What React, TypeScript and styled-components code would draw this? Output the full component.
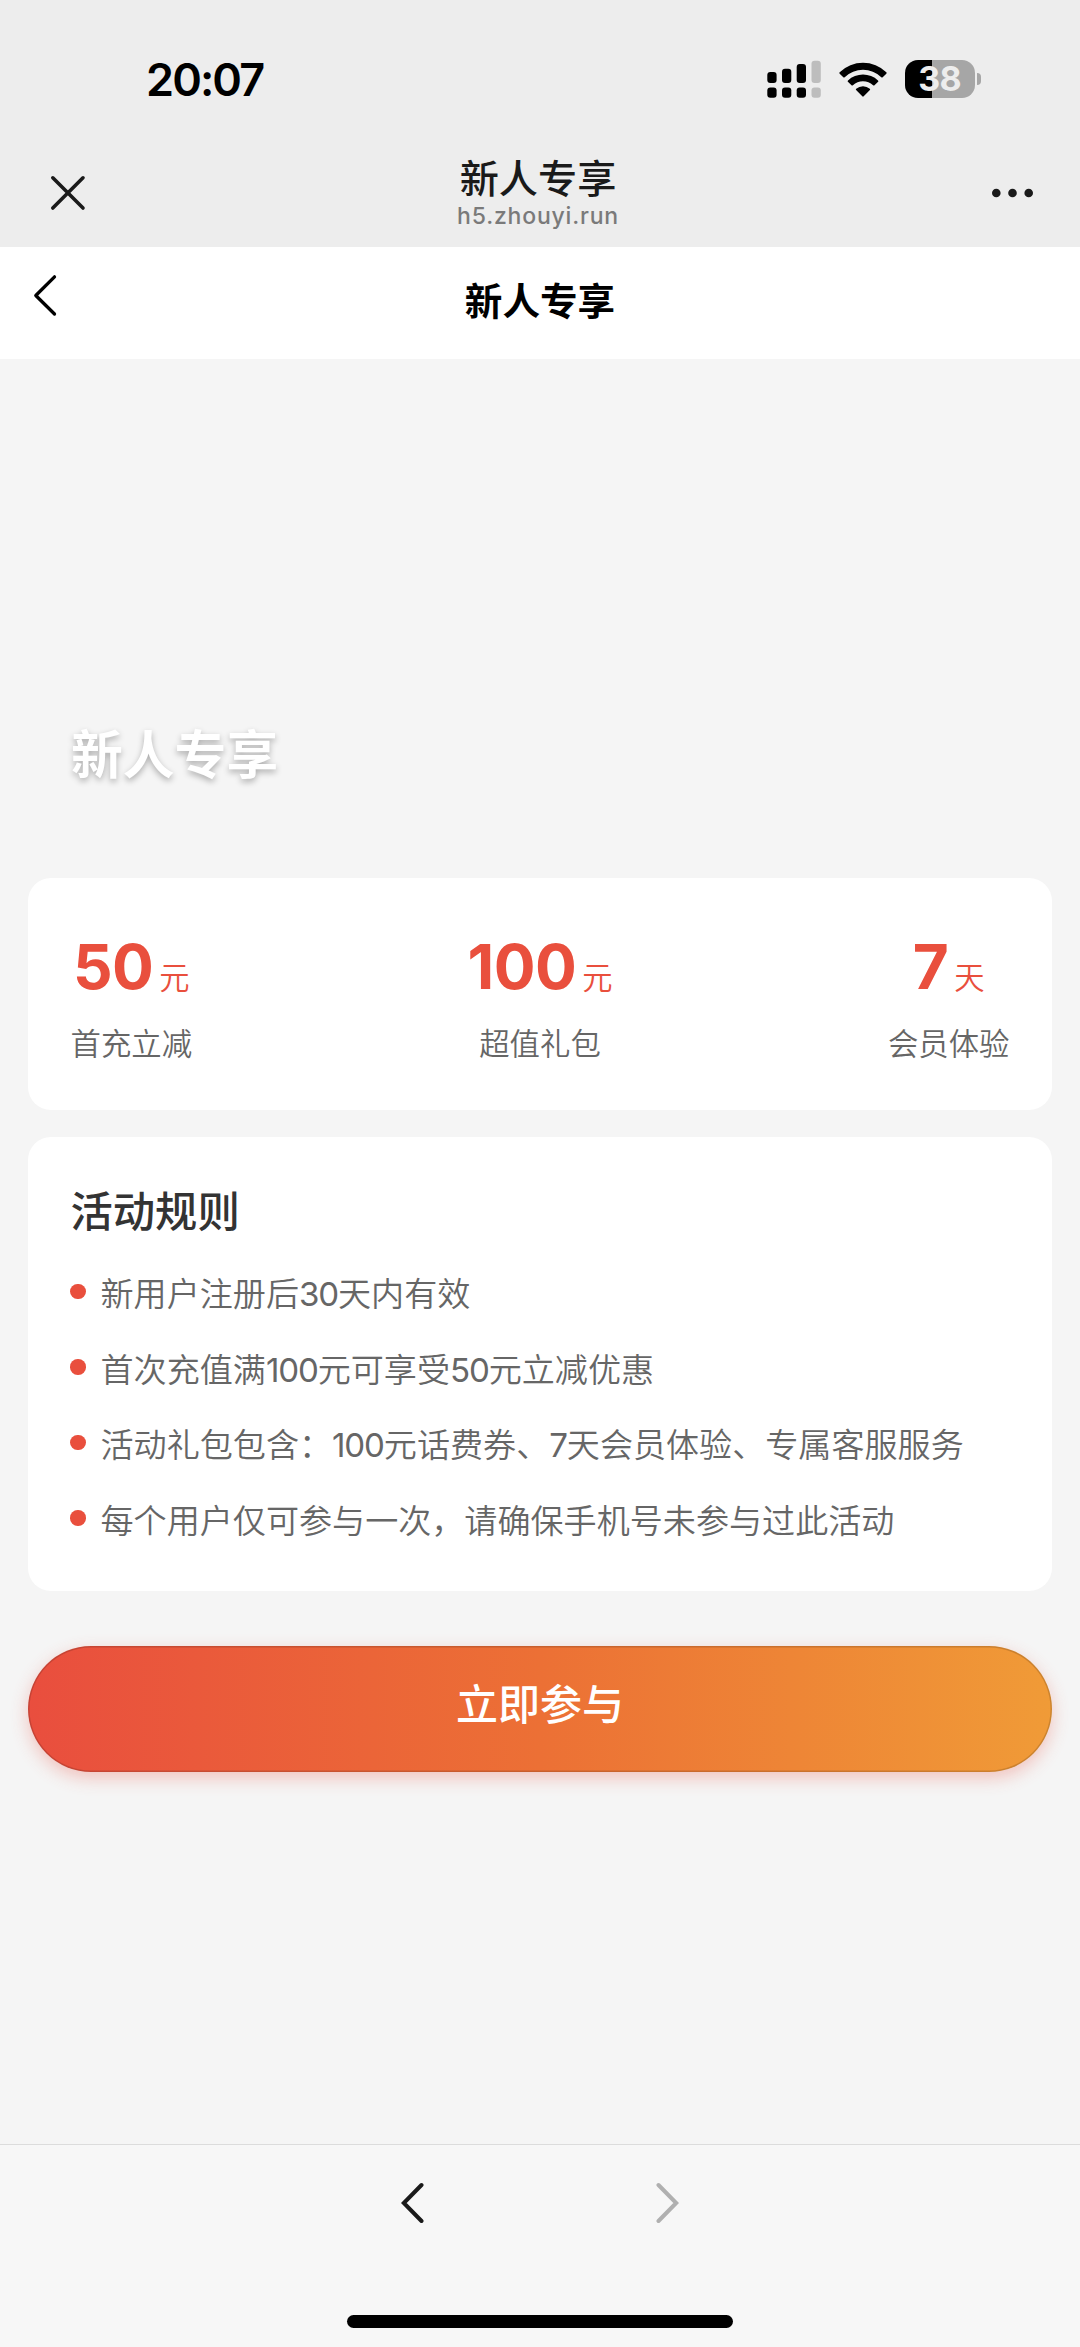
import React from "react";
import styled, { createGlobalStyle } from "styled-components";

const GlobalStyle = createGlobalStyle`
  * { box-sizing: border-box; }
  html, body { margin: 0; padding: 0; background: #f5f5f5; }
  body { font-family: Inter, "Noto Sans CJK SC", sans-serif; }
`;

const Screen = styled.div`
  width: 1080px;
  height: 2347px;
  display: flex;
  flex-direction: column;
  background: #f5f5f5;
  overflow: hidden;
`;

const StatusBar = styled.div`
  height: 146px;
  flex: none;
  display: flex;
  align-items: flex-start;
  justify-content: space-between;
  padding: 50px 99.5px 0 146px;
  background: #ededed;
`;

const Clock = styled.time`
  font-size: 45px;
  line-height: 60px;
  font-weight: 600;
  letter-spacing: -1.9px;
  color: #000;
`;

const StatusIcons = styled.div`
  display: flex;
  align-items: center;
  height: 57px;
`;

const SignalIcon = styled.svg`
  width: 54px;
  height: 38px;
  margin-right: 18px;
`;

const WifiIcon = styled.svg`
  width: 48px;
  height: 38px;
  margin-right: 18px;
`;

const Battery = styled.div`
  width: 70px;
  height: 38px;
  border-radius: 13px;
  display: flex;
  align-items: center;
  justify-content: center;
  background: linear-gradient(90deg, #000 0 38%, #a6a6a6 38%);
  color: #ededed;
  font-size: 34px;
  line-height: 38px;
  font-weight: 700;
  letter-spacing: -0.8px;
`;

const BatteryTip = styled.div`
  width: 4px;
  height: 12px;
  margin-left: 2px;
  border-radius: 0 6px 6px 0;
  background: #a6a6a6;
`;

const BrowserBar = styled.header`
  height: 101px;
  flex: none;
  display: grid;
  grid-template-columns: 200px 1fr 200px;
  background: #ededed;
`;

const BarIcon = styled.svg<{ $end?: boolean }>`
  width: 40px;
  height: 40px;
  margin: 27px 48px 0;
  justify-self: ${(p) => (p.$end ? "end" : "start")};
`;

const PageInfo = styled.div`
  display: flex;
  flex-direction: column;
  align-items: center;
  padding-top: 10px;
`;

const PageName = styled.div`
  font-size: 39.2px;
  line-height: 46px;
  font-weight: 500;
  color: #1a1a1a;
  margin-right: 4px;
`;

const PageHost = styled.div`
  font-size: 23px;
  line-height: 28px;
  margin-right: 4px;
  font-weight: 500;
  letter-spacing: 0.8px;
  color: #7a7a7a;
`;

const NavBar = styled.nav`
  height: 112px;
  flex: none;
  display: grid;
  grid-template-columns: 200px 1fr 200px;
  background: #fff;
`;

const BackIcon = styled.svg`
  width: 26px;
  height: 44px;
  margin: 26px 0 0 31px;
`;

const NavTitle = styled.h1`
  margin: 0;
  padding-top: 28px;
  text-align: center;
  font-size: 37.6px;
  line-height: 54px;
  font-weight: 700;
  color: #000;
`;

const Content = styled.main`
  flex: 1;
  padding: 0 28px;
`;

const Hero = styled.section`
  height: 519px;
  display: flex;
  align-items: flex-end;
  padding: 0 43px 86px;
`;

const HeroTitle = styled.h2`
  margin: 0;
  font-size: 51.8px;
  line-height: 73px;
  font-weight: 700;
  color: #fff;
  text-shadow: 0 3px 6px rgba(0, 0, 0, 0.3);
`;

const Card = styled.section`
  background: #fff;
  border-radius: 23px;
`;

const BenefitCard = styled(Card)`
  height: 232px;
  margin-bottom: 27px;
  padding: 50px 42.5px 0;
  display: flex;
  align-items: flex-start;
  justify-content: space-between;
`;

const Benefit = styled.div`
  display: flex;
  flex-direction: column;
  align-items: center;
`;

const Amount = styled.div`
  display: flex;
  align-items: baseline;
  gap: 6px;
  height: 78px;
  color: #e94f3d;
`;

const Figure = styled.span`
  font-size: 62px;
  line-height: 78px;
  font-weight: 650;
  letter-spacing: -0.5px;
`;

const Unit = styled.span`
  font-size: 30.3px;
  font-weight: 350;
  line-height: 40px;
`;

const BenefitLabel = styled.div`
  margin-top: 16px;
  font-size: 30.4px;
  font-weight: 350;
  line-height: 44px;
  color: #666;
`;

const RulesCard = styled(Card)`
  height: 454px;
  padding: 45px 43px 0 42.5px;
`;

const RulesTitle = styled.h3`
  margin: 0 0 19px;
  font-size: 42.3px;
  line-height: 60px;
  font-weight: 500;
  color: #333;
`;

const RuleList = styled.ul`
  list-style: none;
  margin: 0;
  padding: 0;
`;

const Rule = styled.li`
  display: flex;
  align-items: flex-start;
  height: 75.5px;
  font-size: 33.1px;
  font-weight: 350;
  line-height: 66px;
  color: #666;
  white-space: nowrap;

  &::before {
    content: "";
    flex: none;
    width: 15.5px;
    height: 15.5px;
    margin: 22.5px 15px 0 -0.5px;
    border-radius: 50%;
    background: #e94f3d;
  }
`;

const Digits = styled.span`
  font-weight: 400;
  letter-spacing: -1.15px;
`;

const JoinButton = styled.button`
  display: block;
  width: 100%;
  height: 126px;
  margin: 55px 0 0;
  padding: 0 0 8px;
  border: 0;
  border-radius: 63px;
  background: linear-gradient(90deg, #e94e3e 0%, #ec7035 50%, #f09b37 100%);
  box-shadow: 0 6px 17px rgba(231, 76, 60, 0.3), inset 0 0 0 1.5px rgba(0, 0, 0, 0.15);
  font: 500 42px/118px Inter, "Noto Sans CJK SC", sans-serif;
  color: #fff;
`;

const Toolbar = styled.footer`
  height: 203px;
  flex: none;
  display: flex;
  flex-direction: column;
  align-items: center;
  justify-content: space-between;
  padding: 36px 0 19.5px;
  border-top: 1px solid #dcdcdc;
  background: #f7f7f7;
`;

const HistoryButtons = styled.div`
  display: flex;
  gap: 230px;
`;

const HistoryIcon = styled.svg`
  width: 24px;
  height: 44px;
`;

const HomeIndicator = styled.div`
  width: 386px;
  height: 12.5px;
  border-radius: 7px;
  background: #000;
`;

const benefits = [
  { value: "50", unit: "元", label: "首充立减" },
  { value: "100", unit: "元", label: "超值礼包" },
  { value: "7", unit: "天", label: "会员体验" },
];

const rules = [
  "新用户注册后30天内有效",
  "首次充值满100元可享受50元立减优惠",
  "活动礼包包含：100元话费券、7天会员体验、专属客服服务",
  "每个用户仅可参与一次，请确保手机号未参与过此活动",
];

const signalBars = [
  { x: 0.3, top: 12, on: true },
  { x: 15, top: 8.7, on: true },
  { x: 29.7, top: 4, on: true },
  { x: 44.5, top: 0.7, on: false },
];

// Numbers inside a sentence are set slightly tighter than the Chinese text.
function RuleText({ text }: { text: string }) {
  return (
    <span>
      {text.split(/(\d+)/).map((part, i) => (i % 2 ? <Digits key={i}>{part}</Digits> : part))}
    </span>
  );
}

export default function App() {
  return (
    <Screen>
      <GlobalStyle />
      <StatusBar>
        <Clock>20:07</Clock>
        <StatusIcons>
          <SignalIcon viewBox="0 0 54 38">
            {signalBars.map((bar) => (
              <g key={bar.x} fill={bar.on ? "#000" : "#bdbdbd"}>
                <rect x={bar.x} y={bar.top} width="9.3" height={23 - bar.top} rx="3" />
                <rect x={bar.x} y="27.4" width="9.3" height="10.3" rx="3" />
              </g>
            ))}
          </SignalIcon>
          <WifiIcon viewBox="0 0 48 38">
            <path d="M.7 12.300a33.500 33.500 0 0 1 46.600 0q.7.7 0 1.400l-3.600 3.500q-.7.6-1.400 0a26.500 26.500 0 0 0-36.600 0q-.7.6-1.400 0L.7 13.700q-.7-.7 0-1.400z" />
            <path d="M9 20.400a22 22 0 0 1 30 0q.8.7.1 1.400l-3.600 3.400q-.7.6-1.400 0a15 15 0 0 0-20.200 0q-.7.6-1.400 0L8.900 21.800q-.7-.7.1-1.400z" />
            <path d="M17.200 28.700a10.500 10.500 0 0 1 13.600 0q.8.7.1 1.400l-6.200 6.200q-.7.7-1.400 0l-6.200-6.200q-.7-.7.1-1.400z" />
          </WifiIcon>
          <Battery>38</Battery>
          <BatteryTip />
        </StatusIcons>
      </StatusBar>

      <BrowserBar>
        <BarIcon viewBox="0 0 40 40" fill="none" stroke="#1a1a1a" strokeWidth="3.6" strokeLinecap="round">
          <path d="M4.800 4.800 35 35M35 4.800 4.800 35" />
        </BarIcon>
        <PageInfo>
          <PageName>新人专享</PageName>
          <PageHost>h5.zhouyi.run</PageHost>
        </PageInfo>
        <BarIcon $end viewBox="0 0 40 40" fill="#1a1a1a" overflow="visible">
          <circle cx="4.300" cy="20" r="4.300" />
          <circle cx="20.500" cy="20" r="4.300" />
          <circle cx="36.700" cy="20" r="4.300" />
        </BarIcon>
      </BrowserBar>

      <NavBar>
        <BackIcon viewBox="0 0 26 44" fill="none" stroke="#000" strokeWidth="3.300" strokeLinecap="round" strokeLinejoin="round">
          <path d="M23.500 3.800 4.800 22.500 23.500 41" />
        </BackIcon>
        <NavTitle>新人专享</NavTitle>
      </NavBar>

      <Content>
        <Hero>
          <HeroTitle>新人专享</HeroTitle>
        </Hero>
        <BenefitCard>
          {benefits.map((b) => (
            <Benefit key={b.label}>
              <Amount>
                <Figure>{b.value}</Figure>
                <Unit>{b.unit}</Unit>
              </Amount>
              <BenefitLabel>{b.label}</BenefitLabel>
            </Benefit>
          ))}
        </BenefitCard>
        <RulesCard>
          <RulesTitle>活动规则</RulesTitle>
          <RuleList>
            {rules.map((rule) => (
              <Rule key={rule}>
                <RuleText text={rule} />
              </Rule>
            ))}
          </RuleList>
        </RulesCard>
        <JoinButton type="button">立即参与</JoinButton>
      </Content>

      <Toolbar>
        <HistoryButtons>
          <HistoryIcon viewBox="0 0 24 44" fill="none" stroke="#1a1a1a" strokeWidth="4" strokeLinecap="round">
            <path d="M20.500 4 2.800 22 20.500 40" />
          </HistoryIcon>
          <HistoryIcon viewBox="0 0 24 44" fill="none" stroke="#b0b0b0" strokeWidth="4" strokeLinecap="round">
            <path d="M3.500 4 21.200 22 3.500 40" />
          </HistoryIcon>
        </HistoryButtons>
        <HomeIndicator />
      </Toolbar>
    </Screen>
  );
}
